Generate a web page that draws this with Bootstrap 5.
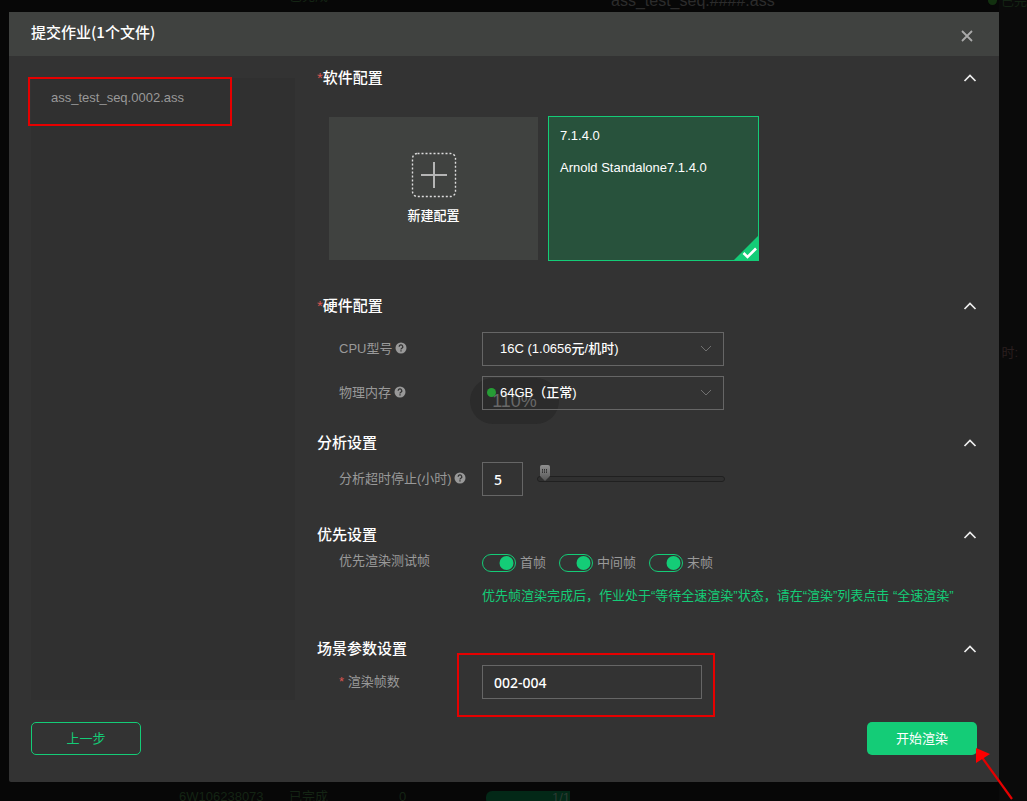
<!DOCTYPE html>
<html lang="zh-CN">
<head>
<meta charset="utf-8">
<meta name="viewport" content="width=device-width, initial-scale=1">
<title>提交作业</title>
<link href="https://cdn.jsdelivr.net/npm/bootstrap@5.3.0/dist/css/bootstrap.min.css" rel="stylesheet">
<style>
  :root { --brand: #14cc77; --panel: #333; --muted-text: #999; --mark-red: #e60000; }
  body {
    font: 13px/20px "Liberation Sans", "Noto Sans CJK SC", sans-serif;
    color: #fff; background: #070707;
  }
  button, input, select { font: inherit; }

  /* job list dimmed behind the dialog */
  .backdrop-row { height: 12px; overflow: hidden; color: #142414; white-space: nowrap; }
  .backdrop-row.tail { height: 19px; }
  .backdrop-row.tail > * { margin-top: 5px; }
  .lifted { margin-top: -14px; }
  .job-grid { display: grid; grid-template-columns: 179px 110px 110px 87px 84px 1fr; line-height: 20px; }
  .job-title { font-size: 16px; color: #2c2c2c; }
  .job-bar { background: #032817; border-radius: 6px 0 0 6px; height: 14px; line-height: 14px; color: #2c3a33; text-align: right; }
  .state-dot { width: 9px; height: 9px; border-radius: 50%; background: #12300f; }
  .side-note { right: 9px; top: 343px; color: #2a1f1f; }
  .stripe { right: 0; left: calc(100% - 28px); background: #0a0a0a; }

  /* dialog */
  .job-dialog { margin: 0 28px 0 9px; background: var(--panel); border-radius: 2px; }
  .dialog-head { height: 44px; padding: 0 22px 4px; background: #404240; }
  .dialog-head h1 { font: 500 15px/24px "Noto Sans CJK SC", sans-serif; }
  .icon-btn { background: none; border: 0; padding: 0; line-height: 0; color: #fff; }
  .dialog-body { padding: 10px 22px 0; gap: 22px; }
  .file-pane { width: 264px; margin-top: 12px; height: 622px; background: #303030; flex: none; }
  .file-item { padding: 10px 20px; color: var(--muted-text); }
  .mark-box { border: 2px solid var(--mark-red); pointer-events: none; }
  .mark-file { inset: -1px 63px -8px -3px; }
  .mark-frames { inset: -12px -13px -18px -25px; }

  .sec-head { height: 24px; }
  .sec-head h2 { font: 500 15px/24px "Liberation Sans", "Noto Sans CJK SC", sans-serif; }
  .sec-head .req { font-weight: 400; }
  .req { color: #d9534f; }
  .config-grid { display: grid; grid-template-columns: 209px 211px; gap: 10px; padding: 26px 0 33px 12px; font-weight: 500; }
  .config-card { height: 143px; margin: 1px 0; border: 0; background: #404240; color: #fff; }
  .config-card.chosen { height: 145px; margin: 0; border: 1px solid var(--brand); background: #28523c; padding: 9px 11px; text-align: left; }
  .row-field { display: grid; grid-template-columns: 143px 1fr; padding-left: 22px; align-items: center; }
  .row-field > label, .row-label, .sw-label { color: var(--muted-text); white-space: nowrap; }
  .help { margin-left: -1px; vertical-align: -1px; }
  .ctl { height: 34px; border: 1px solid #666; border-radius: 0; background-color: transparent; color: #fff; padding: 0 11px; position: relative; font-weight: 500; }
  .ctl option { background: #333; }
  select.ctl { width: 242px; padding-left: 17px; appearance: none;
    background: url("data:image/svg+xml,%3Csvg xmlns='http://www.w3.org/2000/svg' width='12' height='8' fill='none' stroke='%23707070'%3E%3Cpath d='M1 1l5 5 5-5'/%3E%3C/svg%3E") no-repeat right 11px center; }
  .num-ctl { width: 41px; }
  .frame-ctl { width: 220px; }
  .latin-cjk { font-family: "Noto Sans", "Noto Sans CJK SC", sans-serif; font-size: 14px; }
  .mem-dot { width: 9px; height: 9px; border-radius: 50%; background: #269c35; left: 5px; top: 12px; }
  .zoom-pill { left: -12px; top: 2px; width: 89px; height: 46px; border-radius: 23px; background: #2b2b2b; color: #686868; font-size: 18px; line-height: 46px; text-align: center; }

  .hours { appearance: none; width: 188px; height: 28px; background: none; margin-left: 14px; }
  .hours::-webkit-slider-runnable-track { height: 6px; border: 1px solid #202020; border-radius: 3px; background: #303030; }
  .hours::-webkit-slider-thumb { appearance: none; width: 14px; height: 17px; margin-top: -13px;
    background: url("data:image/svg+xml,%3Csvg xmlns='http://www.w3.org/2000/svg' width='14' height='17'%3E%3ClinearGradient id='g' x2='0' y2='1'%3E%3Cstop stop-color='%23909090'/%3E%3Cstop offset='1' stop-color='%23555'/%3E%3C/linearGradient%3E%3Cpath fill='url(%23g)' d='M4 1h6q2 0 2 2v9l-5 5-5-5V3q0-2 2-2z'/%3E%3Cpath stroke='%23333' stroke-width='4' stroke-dasharray='1 1' d='M4 7h6'/%3E%3Cpath stroke='%23777' stroke-width='.6' d='M4 7h6'/%3E%3C/svg%3E") no-repeat; }
  .form-check-input.sw { width: 34px; height: 18px; margin: 0; float: none; border: 1px solid var(--brand); border-radius: 9px; background-color: transparent; }
  .form-check-input.sw:checked { background-image: url("data:image/svg+xml,%3Csvg xmlns='http://www.w3.org/2000/svg' viewBox='0 0 16 16'%3E%3Ccircle cx='7.5' cy='8' r='7' fill='%2314cc77'/%3E%3C/svg%3E"); }
  .switches { gap: 13px; padding-top: 6px; }
  .hint { color: var(--brand); }
  .act { width: 110px; height: 33px; padding: 0; border-radius: 5px; font-size: 13px; line-height: 31px; }
  .act-back { border: 1px solid var(--brand); color: var(--brand); }
  .act-go, .act-go:hover { background: var(--brand); color: #fff; }
  .dialog-foot { padding: 22px 22px 27px; }
  .pointer { left: 107px; top: 25px; pointer-events: none; }
</style>
</head>
<body>
<div class="min-vh-100 d-flex flex-column position-relative overflow-hidden">
  <div class="stripe position-absolute top-0 bottom-0"></div>
  <div class="side-note position-absolute">时:</div>

  <div class="backdrop-row d-flex position-relative">
    <div class="job-grid lifted"><span></span><span>6W106238073</span><span>已完成</span><span>0</span><span></span></div>
    <div class="job-title" style="margin:-9px 0 0 41px">ass_test_seq.####.ass</div>
    <div class="d-flex ms-auto gap-1"><span class="state-dot" style="margin-top:-4px"></span><span style="margin-top:-9px">已完</span></div>
  </div>

  <main class="job-dialog position-relative">
    <header class="dialog-head d-flex align-items-center justify-content-between">
      <h1 class="m-0">提交作业(1个文件)</h1>
      <button class="icon-btn mt-2 me-1" aria-label="关闭"><svg width="12" height="12" fill="none" stroke="#aaa" stroke-width="1.8"><path d="M1 1l10 10M11 1L1 11"/></svg></button>
    </header>

    <div class="dialog-body d-flex">
      <aside class="file-pane">
        <div class="file-item position-relative">ass_test_seq.0002.ass<span class="mark-box mark-file position-absolute"></span></div>
      </aside>

      <form class="flex-grow-1">
        <section>
          <div class="sec-head d-flex align-items-center justify-content-between">
            <h2 class="m-0"><span class="req">*</span>软件配置</h2>
            <button type="button" class="icon-btn" aria-label="收起"><svg width="14" height="8" fill="none" stroke="#eee" stroke-width="1.700"><path d="M1.500 7L7 1.500 12.500 7"/></svg></button>
          </div>
          <div class="config-grid">
            <button type="button" class="config-card d-flex flex-column align-items-center justify-content-center gap-2">
              <svg width="46" height="46" fill="none" stroke="#ddd"><rect x="1.5" y="1.5" width="43" height="43" rx="5" stroke-width="1.4" stroke-dasharray="2 2"/><path d="M10 23h26M23 10v26" stroke="#b5b5b5" stroke-width="2"/></svg>
              <span>新建配置</span>
            </button>
            <button type="button" class="config-card chosen position-relative d-flex flex-column">
              <span>7.1.4.0</span>
              <span class="mt-2 pt-1">Arnold Standalone7.1.4.0</span>
              <svg class="position-absolute end-0 bottom-0" width="24" height="24"><path d="M24 0v24H0z" fill="#14cc77"/><path d="M9.500 17l4 4L22 12.500" fill="none" stroke="#fff" stroke-width="2.600"/></svg>
            </button>
          </div>
        </section>

        <section>
          <div class="sec-head d-flex align-items-center justify-content-between">
            <h2 class="m-0"><span class="req">*</span>硬件配置</h2>
            <button type="button" class="icon-btn" aria-label="收起"><svg width="14" height="8" fill="none" stroke="#eee" stroke-width="1.700"><path d="M1.500 7L7 1.500 12.500 7"/></svg></button>
          </div>
          <div class="row-field" style="padding-top:14px">
            <label for="cpu">CPU型号 <svg class="help" width="12" height="12"><circle cx="6" cy="6" r="5.500" fill="#999"/><path d="M4.200 4.800a1.800 1.800 0 1 1 2.700 1.500q-.9.5-.9 1.100M6 8.300v1.300" fill="none" stroke="#333" stroke-width="1.300"/></svg></label>
            <div><select id="cpu" class="ctl d-block"><option>16C (1.0656元/机时)</option></select></div>
          </div>
          <div class="row-field" style="padding-top:10px">
            <label for="mem">物理内存 <svg class="help" width="12" height="12"><circle cx="6" cy="6" r="5.500" fill="#999"/><path d="M4.200 4.800a1.800 1.800 0 1 1 2.700 1.500q-.9.5-.9 1.100M6 8.300v1.300" fill="none" stroke="#333" stroke-width="1.300"/></svg></label>
            <div class="position-relative"><span class="zoom-pill position-absolute">110%</span><select id="mem" class="ctl d-block"><option>64GB（正常)</option></select><span class="mem-dot position-absolute"></span></div>
          </div>
        </section>

        <section style="padding-top:21px">
          <div class="sec-head d-flex align-items-center justify-content-between">
            <h2 class="m-0">分析设置</h2>
            <button type="button" class="icon-btn" aria-label="收起"><svg width="14" height="8" fill="none" stroke="#eee" stroke-width="1.700"><path d="M1.500 7L7 1.500 12.500 7"/></svg></button>
          </div>
          <div class="row-field" style="padding-top:7px">
            <label for="hours">分析超时停止(小时) <svg class="help" width="12" height="12"><circle cx="6" cy="6" r="5.500" fill="#999"/><path d="M4.200 4.800a1.800 1.800 0 1 1 2.700 1.500q-.9.5-.9 1.100M6 8.300v1.300" fill="none" stroke="#333" stroke-width="1.300"/></svg></label>
            <div class="d-flex align-items-center"><input id="hours" class="ctl num-ctl latin-cjk" value="5"><input type="range" class="hours" min="5" max="72" value="5" aria-label="分析超时停止"></div>
          </div>
        </section>

        <section style="padding-top:27px">
          <div class="sec-head d-flex align-items-center justify-content-between">
            <h2 class="m-0">优先设置</h2>
            <button type="button" class="icon-btn" aria-label="收起"><svg width="14" height="8" fill="none" stroke="#eee" stroke-width="1.700"><path d="M1.500 7L7 1.500 12.500 7"/></svg></button>
          </div>
          <div class="row-field align-items-start">
            <span class="row-label pt-1">优先渲染测试帧</span>
            <div>
              <div class="switches d-flex form-switch ps-0">
                <div class="d-flex align-items-center"><input id="f1" class="form-check-input sw" type="checkbox" checked><label for="f1" class="sw-label ps-1">首帧</label></div>
                <div class="d-flex align-items-center"><input id="f2" class="form-check-input sw" type="checkbox" checked><label for="f2" class="sw-label ps-1">中间帧</label></div>
                <div class="d-flex align-items-center"><input id="f3" class="form-check-input sw" type="checkbox" checked><label for="f3" class="sw-label ps-1">末帧</label></div>
              </div>
              <div class="hint" style="padding-top:13px">优先帧渲染完成后，作业处于“等待全速渲染”状态，请在“渲染”列表点击 “全速渲染”</div>
            </div>
          </div>
        </section>

        <section style="padding-top:31px">
          <div class="sec-head d-flex align-items-center justify-content-between">
            <h2 class="m-0">场景参数设置</h2>
            <button type="button" class="icon-btn" aria-label="收起"><svg width="14" height="8" fill="none" stroke="#eee" stroke-width="1.700"><path d="M1.500 7L7 1.500 12.500 7"/></svg></button>
          </div>
          <div class="row-field" style="padding-top:4px">
            <label for="frames"><span class="req">*</span> 渲染帧数</label>
            <div class="d-flex"><div class="position-relative"><input id="frames" class="ctl frame-ctl latin-cjk d-block" value="002-004"><span class="mark-box mark-frames position-absolute"></span></div></div>
          </div>
        </section>
      </form>
    </div>

    <footer class="dialog-foot d-flex justify-content-between">
      <button class="btn act act-back">上一步</button>
      <div class="position-relative">
        <button class="btn act act-go">开始渲染</button>
        <svg class="pointer position-absolute" width="42" height="54"><path d="M7 9l31 43" stroke="#e60000" stroke-width="2.200"/><path d="M2 1l14 6L2 16z" fill="#f00"/></svg>
      </div>
    </footer>
  </main>

  <div class="backdrop-row tail position-relative">
    <div class="job-grid"><span></span><span>6W106238073</span><span>已完成</span><span>0</span><span class="job-bar mt-1">1/1</span></div>
  </div>
</div>
<script src="https://cdn.jsdelivr.net/npm/bootstrap@5.3.0/dist/js/bootstrap.bundle.min.js"></script>
</body>
</html>
